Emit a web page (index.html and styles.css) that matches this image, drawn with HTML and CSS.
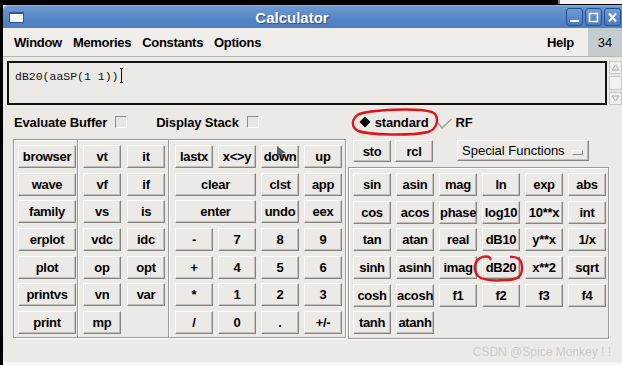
FILE: index.html
```html
<!DOCTYPE html>
<html>
<head>
  <title>Calculator</title>
  <meta charset="UTF-8">
  <link rel="stylesheet" href="styles.css">
</head>
<body>
  <div id="screen">
    <div class="topband"><span class="topband-white"></span></div>
    <div id="window">
      <header class="titlebar">
        <span class="win-icon"></span>
        <span class="title">Calculator</span>
        <span class="win-btns">
          <span class="wbtn"><svg width="11" height="11" viewBox="0 0 11 11"><rect x="1" y="8" width="9" height="2" fill="#fff"/></svg></span>
          <span class="wbtn"><svg width="11" height="11" viewBox="0 0 11 11"><rect x="1.5" y="1.5" width="8" height="8" fill="none" stroke="#fff" stroke-width="1.6"/></svg></span>
          <span class="wbtn"><svg width="11" height="11" viewBox="0 0 11 11"><path d="M2 1.5 L9 9.5 M9 1.5 L2 9.5" stroke="#fff" stroke-width="2"/></svg></span>
        </span>
      </header>

      <nav class="menubar">
        <span class="menu">Window</span>
        <span class="menu">Memories</span>
        <span class="menu">Constants</span>
        <span class="menu">Options</span>
        <span class="spacer"></span>
        <span class="menu help">Help</span>
        <span class="counter">34</span>
      </nav>

      <div class="editor">
        <div class="buffer">dB20(aaSP(1 1))<span class="caret"></span></div>
        <div class="scroll">
          <span class="scroll-btn"><svg width="9" height="7" viewBox="0 0 9 7"><path d="M4.5 1 L8 6 L1 6 Z" fill="none" stroke="#aaa"/></svg></span>
          <span class="scroll-thumb"></span>
          <span class="scroll-btn"><svg width="9" height="7" viewBox="0 0 9 7"><path d="M4.5 6 L8 1 L1 1 Z" fill="none" stroke="#aaa"/></svg></span>
        </div>
      </div>

      <div class="options">
        <span class="opt-label">Evaluate Buffer</span>
        <span class="checkbox"></span>
        <span class="opt-label stack">Display Stack</span>
        <span class="checkbox"></span>
        <span class="radio">
          <svg width="12" height="12" viewBox="0 0 12 12"><path d="M6 0.5 L11.5 6 L6 11.5 L0.5 6 Z" fill="#000"/></svg>
          <span class="opt-label">standard</span>
        </span>
        <span class="radio rf">
          <svg width="16" height="11" viewBox="0 0 16 11"><path d="M0.5 3 L6 10 L15.5 1" fill="none" stroke="#9a9a9a" stroke-width="1.4"/></svg>
          <span class="opt-label">RF</span>
        </span>
      </div>

      <div class="keypad">
        <div class="group tools">
          <div class="sec sec-one">
            <button class="key">browser</button>
            <button class="key">wave</button>
            <button class="key">family</button>
            <button class="key">erplot</button>
            <button class="key">plot</button>
            <button class="key">printvs</button>
            <button class="key">print</button>
          </div>
          <div class="sec sec-two">
            <button class="key">vt</button><button class="key">it</button>
            <button class="key">vf</button><button class="key">if</button>
            <button class="key">vs</button><button class="key">is</button>
            <button class="key">vdc</button><button class="key">idc</button>
            <button class="key">op</button><button class="key">opt</button>
            <button class="key">vn</button><button class="key">var</button>
            <button class="key">mp</button>
          </div>
          <div class="sec sec-three">
            <button class="key">lastx</button><button class="key">x&lt;&gt;y</button><button class="key">down</button><button class="key">up</button>
            <button class="key wide">clear</button><button class="key">clst</button><button class="key">app</button>
            <button class="key wide">enter</button><button class="key">undo</button><button class="key">eex</button>
            <button class="key">-</button><button class="key">7</button><button class="key">8</button><button class="key">9</button>
            <button class="key">+</button><button class="key">4</button><button class="key">5</button><button class="key">6</button>
            <button class="key">*</button><button class="key">1</button><button class="key">2</button><button class="key">3</button>
            <button class="key">/</button><button class="key">0</button><button class="key">.</button><button class="key">+/-</button>
          </div>
        </div>

        <div class="right">
          <div class="regs">
            <button class="key">sto</button>
            <button class="key">rcl</button>
            <button class="key select">Special Functions <span class="select-mark"></span></button>
          </div>
          <div class="group funcs">
            <button class="key">sin</button><button class="key">asin</button><button class="key">mag</button><button class="key">ln</button><button class="key">exp</button><button class="key">abs</button>
            <button class="key">cos</button><button class="key">acos</button><button class="key">phase</button><button class="key">log10</button><button class="key">10**x</button><button class="key">int</button>
            <button class="key">tan</button><button class="key">atan</button><button class="key">real</button><button class="key">dB10</button><button class="key">y**x</button><button class="key">1/x</button>
            <button class="key">sinh</button><button class="key">asinh</button><button class="key">imag</button><button class="key">dB20</button><button class="key">x**2</button><button class="key">sqrt</button>
            <button class="key">cosh</button><button class="key">acosh</button><button class="key">f1</button><button class="key">f2</button><button class="key">f3</button><button class="key">f4</button>
            <button class="key">tanh</button><button class="key">atanh</button>
          </div>
        </div>
      </div>

      <footer class="status">CSDN @Spice Monkey ! !</footer>
    </div>

    <!-- red marks drawn over the screenshot -->
    <svg class="mark mark-std" width="90" height="28" viewBox="0 0 90 28">
      <path d="M7 7 C20 1 68 0 82 4 C90 8 88 21 78 24 C60 28 20 27 8 23 C1 19 1 11 9 6" fill="none" stroke="#e0141b" stroke-width="2.4"/>
    </svg>
    <svg class="mark mark-db" width="58" height="30" viewBox="0 0 58 30">
      <path d="M40 3 C48 2 52 6 52 14 C52 22 48 26 36 26 C24 27 12 26 8 22 C3 16 4 8 10 4 C16 1 22 3 20 6" fill="none" stroke="#e0141b" stroke-width="2.4"/>
    </svg>
    <svg class="pointer" width="12" height="16" viewBox="0 0 12 16">
      <path d="M1 1 L1 12 L4 9 L6.5 14 L8.5 13 L6 8 L10 8 Z" fill="#333" opacity="0.75"/>
    </svg>
  </div>
</body>
</html>
```

FILE: styles.css
```css
body {
  margin: 0;
  background-color: #000;
  font-family: 'Liberation Sans', Arial, sans-serif;
}

#screen {
  position: relative;
  width: 622px;
  height: 365px;
  overflow: hidden;
  background-color: #000;
  padding-left: 3px;
  box-sizing: border-box;
}

.topband {
  height: 5px;
  display: flex;
  justify-content: flex-end;
}

.topband-white {
  width: 62px;
  height: 4px;
  background-color: #f4f4f4;
  border-left: 2px solid #777;
}

#window {
  width: 619px;
  height: 360px;
  background-color: #ebeae6;
  display: flex;
  flex-direction: column;
}

.titlebar {
  height: 23px;
  display: flex;
  align-items: center;
  background: linear-gradient(#6f9ad3, #5585c6 60%, #4f7ec0);
  border-top-left-radius: 5px;
  border-top: 1px solid #8fb2e0;
  box-sizing: border-box;
}

.win-icon {
  width: 13px;
  height: 8px;
  margin-left: 6px;
  background-color: #f6f6f6;
  border: 1px solid #2d5a96;
  border-top-width: 2px;
}

.title {
  flex: 1;
  text-align: center;
  color: #fff;
  font-weight: bold;
  font-size: 15px;
  text-shadow: 1px 1px 1px #2a4f82;
  padding-right: 6px;
}

.win-btns {
  display: flex;
  gap: 2px;
  margin-right: 1px;
}

.wbtn {
  width: 15px;
  height: 16px;
  border: 1px solid #234f8c;
  border-radius: 3px;
  background: linear-gradient(#6e9bd6, #4a7cc0);
  display: flex;
  align-items: center;
  justify-content: center;
}

.menubar {
  height: 29px;
  display: flex;
  align-items: center;
  background-color: #efeeeb;
  border-bottom: 1px solid #b8b7b3;
  box-sizing: border-box;
  font-size: 13px;
  font-weight: bold;
  letter-spacing: -0.3px;
}

.menu {
  margin-left: 11px;
}

.menu:first-child {
  margin-left: 11px;
}

.spacer {
  flex: 1;
}

.help {
  margin-right: 14px;
}

.counter {
  align-self: stretch;
  width: 34px;
  display: flex;
  align-items: center;
  justify-content: center;
  background-color: #c5cdcc;
  font-weight: normal;
  font-size: 13px;
  letter-spacing: 0;
}

.editor {
  display: flex;
  margin-top: 4px;
  padding-left: 4px;
  height: 44px;
}

.buffer {
  width: 600px;
  box-sizing: border-box;
  border: 2px solid #111;
  background-color: #ebe9e5;
  padding: 5px 5px 5px 6px;
  font-family: 'Liberation Mono', monospace;
  font-size: 11.5px;
  line-height: 14px;
  color: #111;
}

.caret {
  display: inline-block;
  width: 3px;
  height: 13px;
  margin-left: 1px;
  vertical-align: -3px;
  border-top: 1px solid #111;
  border-bottom: 1px solid #111;
  background: linear-gradient(90deg, transparent 1px, #111 1px, #111 2px, transparent 2px);
}

.scroll {
  width: 13px;
  margin-left: 2px;
  display: flex;
  flex-direction: column;
  background-color: #e6e5e1;
}

.scroll-btn {
  height: 11px;
  display: flex;
  align-items: center;
  justify-content: center;
  background-color: #f0efec;
  border: 1px solid #c9c8c4;
}

.scroll-thumb {
  flex: 1;
  margin: 2px 0;
  background-color: #f2f1ee;
  border: 1px solid #c9c8c4;
}

.options {
  height: 34px;
  display: flex;
  align-items: center;
  padding-left: 11px;
  font-size: 13px;
  font-weight: bold;
  letter-spacing: -0.15px;
}

.checkbox {
  width: 10px;
  height: 10px;
  margin-left: 8px;
  border: 1px solid;
  border-color: #8f8e8a #fff #fff #8f8e8a;
  background-color: #e7e6e2;
}

.opt-label.stack {
  margin-left: 29px;
}

.radio {
  display: flex;
  align-items: center;
  gap: 4px;
  margin-left: 100px;
}

.radio.rf {
  margin-left: 8px;
  gap: 3px;
}

.radio.rf svg {
  margin-top: 2px;
}

.keypad {
  height: 200px;
  display: flex;
  padding-left: 10px;
}

.group {
  border: 1px solid #9b9a96;
  box-shadow: inset 1px 1px 0 #fff, 1px 1px 0 #fff;
}

.tools {
  display: flex;
  width: 333px;
  height: 199px;
  box-sizing: border-box;
}

.sec {
  display: grid;
  grid-template-rows: repeat(7, 23px);
  row-gap: 4.67px;
  padding-top: 5px;
}

.sec-one {
  width: 64px;
  grid-template-columns: 58px;
  padding-left: 4px;
  box-sizing: border-box;
  border-right: 1px solid #9b9a96;
}

.sec-two {
  grid-template-columns: 38px 38px;
  column-gap: 6px;
  padding-left: 4px;
  padding-right: 3px;
  border-left: 1px solid #fff;
  border-right: 1px solid #9b9a96;
}

.sec-three {
  grid-template-columns: repeat(4, 38px);
  column-gap: 5px;
  padding-left: 5px;
  border-left: 1px solid #fff;
}

.key {
  margin: 0;
  padding: 0;
  font-family: 'Liberation Sans', Arial, sans-serif;
  font-size: 13px;
  font-weight: bold;
  color: #000;
  background-color: #eceae6;
  border: 1px solid;
  border-color: #fdfdfd #86857f #86857f #fdfdfd;
  box-shadow: inset -1px -1px 0 #c2c0bb;
  white-space: nowrap;
  overflow: visible;
  letter-spacing: -0.3px;
}

.key.wide {
  grid-column: span 2;
}

.right {
  margin-left: 2px;
  display: flex;
  flex-direction: column;
}

.regs {
  display: flex;
  align-items: flex-start;
  height: 28px;
  padding-top: 1px;
  padding-left: 5px;
  box-sizing: border-box;
}

.regs .key {
  width: 38px;
  height: 22px;
  margin-right: 4px;
}

.regs .key.select {
  width: 132px;
  height: 21px;
  margin-left: 20px;
  font-weight: normal;
  text-align: left;
  padding-left: 4px;
  letter-spacing: 0;
  display: flex;
  align-items: center;
}

.select-mark {
  width: 9px;
  height: 3px;
  margin-left: 7px;
  margin-top: 4px;
  border: 1px solid;
  border-color: #fff #888 #888 #fff;
}

.funcs {
  width: 261px;
  height: 172px;
  box-sizing: border-box;
  display: grid;
  grid-template-columns: repeat(6, 38px);
  grid-template-rows: repeat(6, 23px);
  column-gap: 5px;
  row-gap: 4.67px;
  padding: 5px 0 0 4px;
}

.status {
  flex: 1;
  display: flex;
  justify-content: flex-end;
  align-items: flex-end;
  padding: 0 11px 3px 0;
  font-size: 12px;
  color: #cdcdcb;
  border-bottom: 3px solid #f7f7f5;
}

.mark {
  position: absolute;
}

.mark-std {
  left: 350px;
  top: 108px;
}

.mark-db {
  left: 470px;
  top: 254px;
}

.pointer {
  position: absolute;
  left: 276px;
  top: 145px;
}
```
